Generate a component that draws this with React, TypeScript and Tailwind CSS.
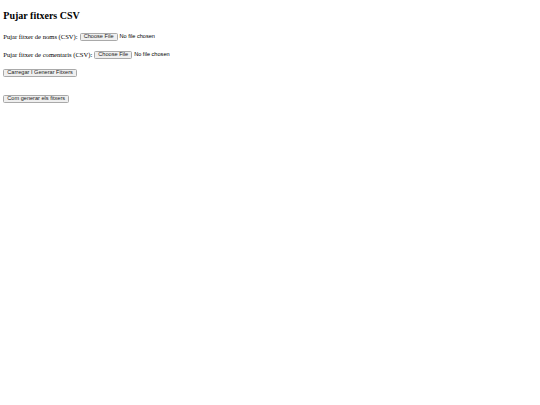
import { useState } from "react";

const fileCls =
  "align-middle text-[5.6px] text-black [font-family:'Liberation_Sans',Arial,sans-serif] file:mr-[2px] file:h-[8px] file:rounded-[1.5px] file:border file:border-[#a9a9a9] file:bg-[#efefef] file:px-[3px] file:py-0 file:leading-none file:text-[#222]";

const btnCls =
  "flex h-[8px] items-center rounded-[1.5px] border border-[#a9a9a9] bg-[#efefef] px-[3px] py-0 text-[5.6px] leading-none text-[#222] [font-family:'Liberation_Sans',Arial,sans-serif]";

export default function App() {
  const [help, setHelp] = useState(false);

  return (
    <div className="min-h-[405px] w-[540px] bg-white px-[3.3px] text-black [font-family:'Liberation_Serif','Times_New_Roman',serif]">
      <h2 className="pt-[9.5px] text-[10px] font-bold leading-[1.15]">Pujar fitxers CSV</h2>

      <form className="mt-[10px] flex flex-col items-start">
        <label className="flex h-[11px] items-center gap-[2px] text-[6.6px]">
          Pujar fitxer de noms (CSV):
          <input type="file" accept=".csv" className={fileCls} />
        </label>
        <label className="mt-[7px] flex h-[11px] items-center gap-[2px] text-[6.6px]">
          Pujar fitxer de comentaris (CSV):
          <input type="file" accept=".csv" className={fileCls} />
        </label>
        <button type="button" className={`mt-[9px] ${btnCls}`}>
          Carregar I Generar Fitxers
        </button>
      </form>

      <button type="button" onClick={() => setHelp(!help)} className={`mt-[18px] ${btnCls}`}>
        Com generar els fitxers
      </button>
    </div>
  );
}
